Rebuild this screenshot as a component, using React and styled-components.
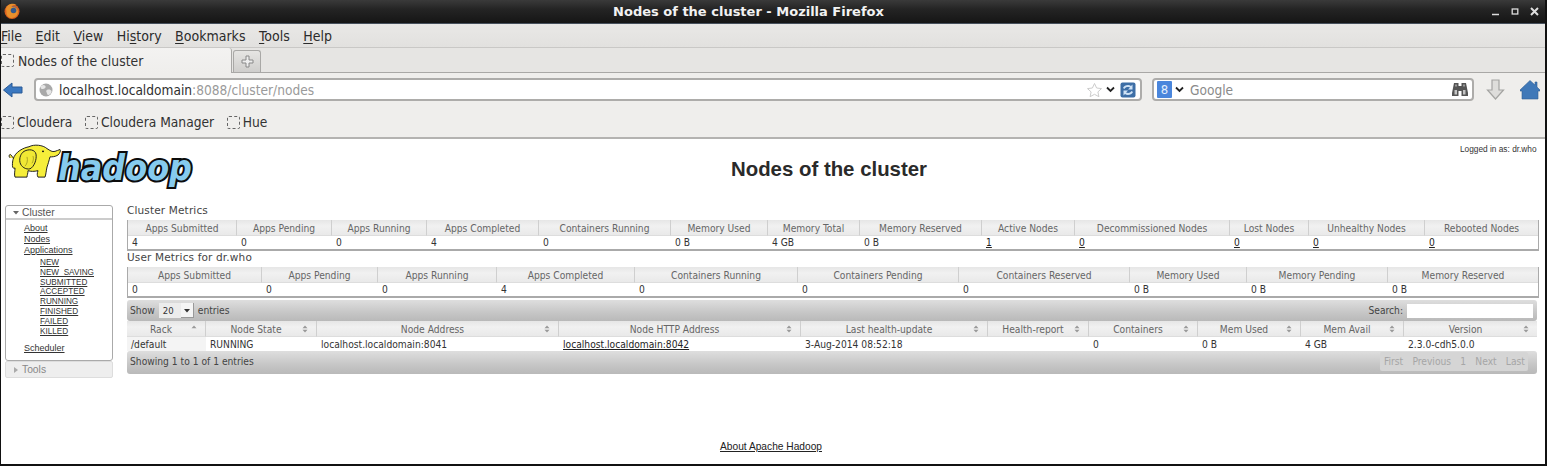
import React from "react";
import styled, { createGlobalStyle } from "styled-components";

const Global = createGlobalStyle`
  html, body { margin: 0; padding: 0; background: #000; }
  * { box-sizing: border-box; }
`;

const UI = `"DejaVu Sans", "Liberation Sans", sans-serif`;
const COND = `"DejaVu Sans Condensed", "DejaVu Sans", "Liberation Sans", sans-serif`;
const ARIAL = `"Liberation Sans", Arial, sans-serif`;

const Win = styled.div`
  width: 1547px; height: 466px; display: flex; flex-direction: column;
  border-left: 1px solid #111; border-right: 2px solid #111; border-bottom: 2px solid #111;
  font-family: ${COND}; font-stretch: condensed; overflow: hidden; background: #fff;
`;
const TitleBar = styled.div`
  height: 24px; flex: none; display: flex; align-items: center; padding: 0 4px 0 3px;
  background: linear-gradient(#3a3a3a 0, #242424 40%, #151515 100%);
  border-bottom: 1px solid #46505c; color: #f2f2f2;
`;
const TitleText = styled.div`
  flex: 1; text-align: center; font: 700 13px ${UI}; font-stretch: normal; padding-right: 14px;
`;
const WinBtns = styled.div`display: flex; align-items: center; gap: 11px; padding-right: 2px;`;
const MenuBar = styled.div`
  height: 24px; flex: none; display: flex; align-items: center; gap: 13.5px;
  background: linear-gradient(#e9e8e6, #e2e1df); border-bottom: 1px solid #c9c8c6;
  font-size: 14px; color: #2b2b2b;
`;
const U = styled.span`text-decoration: underline; text-underline-offset: 2px;`;
const TabBar = styled.div`
  height: 25px; flex: none; display: flex; align-items: flex-end;
  background: #e6e5e3; border-bottom: 1px solid #a9a8a6;
`;
const Tab = styled.div`
  width: 231px; height: 25px; display: flex; align-items: center; gap: 4px;
  background: linear-gradient(#f3f2f1, #efeeec); border-right: 1px solid #a9a8a6; border-radius: 0 3px 0 0;
  font-size: 13.8px; color: #333; margin-bottom: -1px;
`;
const Favicon = styled.span`
  display: inline-block; width: 13px; height: 13px; flex: none;
  border: 1px dashed #666; border-radius: 2px;
`;
const NewTab = styled.div`
  width: 28px; height: 22px; margin-left: 1px; display: flex; align-items: center; justify-content: center;
  background: linear-gradient(#e6e5e3, #cfcecc); border: 1px solid #a9a8a6; border-bottom: 0; border-radius: 3px 3px 0 0;
`;
const NavBar = styled.div`
  height: 33px; flex: none; display: flex; align-items: center; background: #efeeec; padding: 0 3px 0 2px;
`;
const Field = styled.div`
  height: 23px; display: flex; align-items: center; background: #fff;
  border: 2px solid #adacaa; border-radius: 4px; width: ${p => p.$w}px; margin-left: ${p => p.$ml}px;
  font-size: 13.6px; padding: 0 4px 0 3px; gap: 3px;
`;
const Url = styled.div`flex: 1; color: #2f2f2f; padding-left: 3px; white-space: nowrap;`;
const Dim = styled.span`color: #9a9a9a;`;
const Hint = styled.div`flex: 1; color: #8a8a8a; padding-left: 3px;`;
const ToolIcon = styled.svg`flex: none; margin-left: ${p => p.$ml || 0}px; display: block;`;
const Bookmarks = styled.div`
  height: 33px; flex: none; display: flex; align-items: center; background: #efeeec;
  border-bottom: 2px solid #b4b3b1; font-size: 13.7px; color: #333; padding-top: 1px;
`;
const Bm = styled.div`display: flex; align-items: center; gap: 3px; margin-right: 12.5px;`;

const Page = styled.div`
  flex: 1; min-height: 0; display: flex; flex-direction: column; background: #fff; padding-right: 8px;
  color: #333;
`;
const Header = styled.div`height: 66px; flex: none; display: flex; align-items: flex-start;`;
const Logo = styled.svg`flex: none; margin: 3px 0 0 5px; display: block;`;
const H1 = styled.h1`
  flex: 1; margin: 19px 0 0; text-align: center; font: 700 20.4px ${ARIAL}; color: #2a2a2a;
`;
const Logged = styled.div`
  flex: none; width: 76px; margin: 5px 1px 0 0; text-align: right; font: 8.3px ${ARIAL}; color: #333; white-space: nowrap;
`;
const Columns = styled.div`display: flex; align-items: flex-start;`;
const Side = styled.div`width: 108px; margin-left: 4px; flex: none; font-family: ${ARIAL}; font-stretch: normal;`;
const Panel = styled.div`border: 1px solid #aaa; border-radius: 3px; height: 156px;`;
const PanelHead = styled.div`
  height: 14px; border-bottom: 2px solid #ccc; display: flex; align-items: center; gap: 3px; padding-left: 7px;
  font-size: 10.3px; color: #555;
`;
const Tools = styled.div`
  height: 17px; background: #eee; border: 1px solid #ddd; border-radius: 2px;
  display: flex; align-items: center; gap: 4px; padding-left: 8px; font-size: 10.3px; color: #888;
`;
const L1 = styled.a`
  display: block; margin-left: 18px; font-size: 9px; line-height: 11px; color: #333; text-decoration: underline;
`;
const L1Wrap = styled.div`padding-top: 3px;`;
const L2Wrap = styled.div`padding: 2px 0 7px 16px;`;
const L2 = styled(L1)`font-size: 8.2px; line-height: 9.8px; margin-left: 18px;`;

const Main = styled.div`flex: 1; margin-left: 14px; min-width: 0;`;
const Label = styled.div`
  font: 10.5px/11px ${UI}; font-stretch: normal; letter-spacing: .15px; color: #444; height: 15px; margin-top: ${p => p.$mt || 0}px;
`;
const Table = styled.table`
  border-collapse: separate; border-spacing: 0; table-layout: fixed; width: 1410px; font-size: 10.2px;
  border-left: ${p => (p.$plain ? 0 : "1px solid #aaa")}; border-right: ${p => (p.$plain ? 0 : "1px solid #aaa")};
  border-bottom: ${p => (p.$plain ? 0 : "2px solid #aaa")};
`;
const Th = styled.th`
  height: 16px; padding: 1px 4px 0; font-weight: 400; color: #666; text-align: center; white-space: nowrap;
  background: linear-gradient(#e6e6e6, #f1f1f1 40%, #e9e9e9); border-right: 1px solid #cfcfcf;
  border-bottom: 1px solid #ddd; position: relative; overflow: hidden;
  &:last-child { border-right: 0; }
`;
const ThIn = styled.span`display: flex; align-items: center; justify-content: center; padding-right: ${p => p.$pr || 0}px;`;
const SortIcon = styled.svg`position: absolute; right: ${p => p.$r || 8}px; top: 4px;`;
const Td = styled.td`
  height: ${p => 13 + (p.$pt || 0)}px; padding: ${p => p.$pt || 0}px 4px 0; line-height: 12px; color: #333; white-space: nowrap; overflow: hidden; background: ${p => p.$bg || "#fff"};
`;
const CellLink = styled.a`color: #222; text-decoration: underline;`;
const Bar = styled.div`
  height: ${p => p.$h}px; margin-top: ${p => p.$mt || 0}px; display: flex; align-items: center;
  justify-content: space-between; width: 1410px; padding: ${p => p.$pad || "0 3px"}; font-size: 10.2px; color: #444;
  background: linear-gradient(#dedede, #c6c6c6 60%, #b9b9b9); border-radius: 3px;
`;
const Group = styled.div`display: flex; align-items: center; gap: 4px;`;
const Select = styled.div`
  width: 35px; height: 15px; background: #ececec; display: flex; align-items: center; justify-content: space-between;
  padding-left: 4px; font-size: 9.5px; color: #333;
`;
const SelBtn = styled.span`
  width: 13px; height: 15px; background: #f5f5f5; border-right: 1px solid #999; border-bottom: 1px solid #999;
  display: flex; align-items: center; justify-content: center;
`;
const SearchBox = styled.div`width: 126px; height: 14px; background: #fff; margin-right: 1px;`;
const Pager = styled.div`
  display: flex; height: 19px; align-items: center; padding: 0 3px 0 4px; background: #d5d5d5; border-radius: 2px;
  color: #a6a6a6; margin-right: 6px; width: 148px; justify-content: space-between;
`;
const Footer = styled.div`
  margin-top: auto; height: 23px; padding-left: 4px; text-align: center; font: 10.2px ${ARIAL}; font-stretch: normal; color: #222; text-decoration: underline;
`;

const diffs = a => a.slice(1).map((v, i) => v - a[i]);

function Cols({ edges }) {
  return <colgroup>{diffs(edges).map((w, i) => <col key={i} width={w} />)}</colgroup>;
}

const Sort = ({ only }) => (
  <SortIcon width="6" height="8" viewBox="0 0 6 8" fill="#999">
    <path d="M3 0.5 5.5 3.2H.5z" />
    {!only && <path d="M3 7.5 .5 4.8H5.5z" />}
  </SortIcon>
);

const Caret = ({ c = "#333" }) => (
  <svg width="6" height="5" viewBox="0 0 6 5"><path d="M0 1h6L3 4.5z" fill={c} /></svg>
);
const Chev = () => (
  <ToolIcon width="9" height="7" viewBox="0 0 9 7"><path d="M1 1.5 4.500 5 8 1.500" fill="none" stroke="#222" strokeWidth="1.800" /></ToolIcon>
);

const Firefox = () => (
  <svg width="16" height="17" viewBox="0 0 16 17">
    <circle cx="8" cy="8.500" r="7.500" fill="#d9601f" />
    <circle cx="9" cy="8" r="4.600" fill="#3c6fa8" />
    <path d="M2 6C3 1 9-.5 13 2c-3-.6-5 .5-5.500 2 3-.5 6 1 6.500 4 .3 4-3 7-6.500 7C5 15 2 12 2.500 9z" fill="#e8902c" />
    <circle cx="9.500" cy="7.500" r="2.800" fill="#33588c" />
  </svg>
);

const Elephant = () => (
  <g stroke="#1a1a1a" strokeWidth="1" strokeLinejoin="round" transform="translate(1 2) scale(1 .92)">
    <path d="M3 15c-2-2 0-5 1-3 1 1 2 3 3 4" fill="#eee24a" />
    <path d="M6 17C8 8 17 4 22 3 27 0 36 1 40 5c3 2 5 4 8 3 2-1 3-1 5-2 1 1 0 4-2 6-3 2-6 2-8 2-1 4-2 8-3 11-1 5-1 8-2 11h-7c-1-2-1-4 0-7-4 1-7 1-10 0 0 3-1 5-1 7H8c-1-3 0-6 0-10C5 28 5 22 6 17z" fill="#f6ee3a" />
    <path d="M17 8c5-3 11-2 12 3 1 6-2 14-6 16-4 1-9-2-10-7-1-5 1-10 4-12z" fill="#f0e834" />
    <path d="M20 14c1 4 0 8-2 10M26 13c1 3 0 6-1 8" fill="none" stroke="#8d8620" strokeWidth=".7" />
    <circle cx="36" cy="8" r="1" fill="#111" stroke="none" />
  </g>
);

const edgesA = [127, 236, 331, 426, 538, 670, 767, 859, 981, 1074, 1229, 1308, 1424, 1537];
const headA = ["Apps Submitted", "Apps Pending", "Apps Running", "Apps Completed", "Containers Running", "Memory Used", "Memory Total", "Memory Reserved", "Active Nodes", "Decommissioned Nodes", "Lost Nodes", "Unhealthy Nodes", "Rebooted Nodes"];
const rowA = ["4", "0", "0", "4", "0", "0 B", "4 GB", "0 B", "@1", "@0", "@0", "@0", "@0"];
const edgesB = [127, 261, 377, 496, 634, 797, 958, 1129, 1246, 1387, 1537];
const headB = ["Apps Submitted", "Apps Pending", "Apps Running", "Apps Completed", "Containers Running", "Containers Pending", "Containers Reserved", "Memory Used", "Memory Pending", "Memory Reserved"];
const rowB = ["0", "0", "0", "4", "0", "0", "0", "0 B", "0 B", "0 B"];
const edgesC = [127, 206, 317, 559, 801, 988, 1089, 1198, 1301, 1404, 1537];
const headC = ["Rack", "Node State", "Node Address", "Node HTTP Address", "Last health-update", "Health-report", "Containers", "Mem Used", "Mem Avail", "Version"];
const rowC = ["/default", "RUNNING", "localhost.localdomain:8041", "@localhost.localdomain:8042", "3-Aug-2014 08:52:18", "", "0", "0 B", "4 GB", "2.3.0-cdh5.0.0"];

const cell = v => (v.startsWith("@") ? <CellLink>{v.slice(1)}</CellLink> : v);

function Metric({ edges, head, row }) {
  return (
    <Table>
      <Cols edges={edges} />
      <thead><tr>{head.map(h => <Th key={h}>{h}</Th>)}</tr></thead>
      <tbody><tr>{row.map((v, i) => <Td key={i}>{cell(v)}</Td>)}</tr></tbody>
    </Table>
  );
}

export default function App() {
  return (
    <>
      <Global />
      <Win>
        <TitleBar>
          <Firefox />
          <TitleText>Nodes of the cluster - Mozilla Firefox</TitleText>
          <WinBtns>
            <svg width="9" height="9" viewBox="0 0 9 9"><path d="M1 7.500h7" stroke="#ddd" strokeWidth="1.500" /></svg>
            <svg width="8" height="9" viewBox="0 0 8 9"><rect x="1.200" y="2" width="5.600" height="5" fill="none" stroke="#ddd" strokeWidth="1.300" /></svg>
            <svg width="9" height="9" viewBox="0 0 9 9"><path d="M1 1l7 7M8 1 1 8" stroke="#ddd" strokeWidth="2" /></svg>
          </WinBtns>
        </TitleBar>
        <MenuBar>
          <span><U>F</U>ile</span>
          <span><U>E</U>dit</span>
          <span><U>V</U>iew</span>
          <span>Hi<U>s</U>tory</span>
          <span><U>B</U>ookmarks</span>
          <span><U>T</U>ools</span>
          <span><U>H</U>elp</span>
        </MenuBar>
        <TabBar>
          <Tab><Favicon />Nodes of the cluster</Tab>
          <NewTab>
            <svg width="13" height="13" viewBox="0 0 13 13"><path d="M5 1h3v4h4v3H8v4H5V8H1V5h4z" fill="#eee" stroke="#888" /></svg>
          </NewTab>
        </TabBar>
        <NavBar>
          <ToolIcon width="20" height="20" viewBox="0 0 20 20">
            <path d="M0.500 10 9 3v4h10v6H9v4z" fill="#3b78c0" stroke="#2a5a96" />
          </ToolIcon>
          <Field $w={1108} $ml={11}>
            <ToolIcon width="14" height="14" viewBox="0 0 14 14">
              <circle cx="7" cy="7" r="6.500" fill="#a9a9a9" />
              <path d="M4 2c2 0 3 1 2.500 2.500S4 6 3 6 1 5 2 3zM8 7c2-1 4 0 4.500 1S11 12 9.500 12 8 10 7.500 9 7 8 8 7z" fill="#e6e6e6" />
            </ToolIcon>
            <Url>localhost.localdomain<Dim>:8088/cluster/nodes</Dim></Url>
            <ToolIcon width="17" height="16" viewBox="0 0 17 16">
              <path d="M8.500 1.500 10.600 6l4.900.6-3.600 3.300 1 4.800-4.400-2.400-4.400 2.400 1-4.800L1.500 6.600 6.400 6z" fill="#fff" stroke="#ccc" />
            </ToolIcon>
            <Chev />
            <ToolIcon $ml={2} width="16" height="16" viewBox="0 0 16 16">
              <rect x=".5" y=".5" width="15" height="15" rx="2" fill="#3d6ea6" />
              <path d="M3 6c1-3 6-4 8-2l1.500-1.500V7.500H8L10 5.500C8 4.500 5.500 5 4.500 7z" fill="#cfe2f5" />
              <path d="M13 10c-1 3-6 4-8 2l-1.500 1.500V8.500H8L6 10.500c2 1 4.500.5 5.500-1.500z" fill="#cfe2f5" />
            </ToolIcon>
          </Field>
          <Field $w={322} $ml={10}>
            <ToolIcon width="15" height="17" viewBox="0 0 15 17">
              <rect width="15" height="17" rx="1" fill="#4a86dc" />
              <text x="7.500" y="13" textAnchor="middle" fontSize="13" fontFamily={UI} fill="#e4eefc">8</text>
            </ToolIcon>
            <Chev />
            <Hint>Google</Hint>
            <ToolIcon width="16" height="15" viewBox="0 0 16 15">
              <path d="M2 1h4.500v3h3V1H14l2 10v3H9.500V9h-3v5H0v-3z" fill="#555" />
              <path d="M2.500 8h2.500v4.500H2.500zM11 8h2.500v4.500H11z" fill="#c4c4c4" />
              <path d="M3 2.500h2v2H3zM11 2.500h2v2h-2z" fill="#999" />
            </ToolIcon>
          </Field>
          <ToolIcon $ml={12} width="19" height="21" viewBox="0 0 19 21">
            <path d="M6 1h7v10h4.500L9.500 20 1.500 11H6z" fill="#dedddb" stroke="#a4a4a2" strokeWidth="1.200" />
          </ToolIcon>
          <ToolIcon $ml={15} width="20" height="20" viewBox="0 0 20 20">
            <path d="M10 .5 15 5V2h2v5l3 3v1h-2v8H2v-8H0v-1z" fill="#3f78b8" stroke="#2f5f96" strokeWidth=".6" />
          </ToolIcon>
        </NavBar>
        <Bookmarks>
          <Bm><Favicon />Cloudera</Bm>
          <Bm><Favicon />Cloudera Manager</Bm>
          <Bm><Favicon />Hue</Bm>
        </Bookmarks>
        <Page>
          <Header>
            <Logo width="192" height="50" viewBox="0 0 192 50">
              <Elephant />
              <text
                x="52" y="38" fontFamily={UI} fontWeight="700" fontStyle="italic" fontSize="36"
                textLength="134" lengthAdjust="spacingAndGlyphs"
                fill="#86cbee" stroke="#0c0c0c" strokeWidth="4.200" paintOrder="stroke"
              >hadoop</text>
            </Logo>
            <H1>Nodes of the cluster</H1>
            <Logged>Logged in as: dr.who</Logged>
          </Header>
          <Columns>
            <Side>
              <Panel>
                <PanelHead><Caret c="#666" />Cluster</PanelHead>
                <L1Wrap>
                  <L1>About</L1>
                  <L1>Nodes</L1>
                  <L1>Applications</L1>
                </L1Wrap>
                <L2Wrap>
                  {["NEW", "NEW_SAVING", "SUBMITTED", "ACCEPTED", "RUNNING", "FINISHED", "FAILED", "KILLED"].map(s => <L2 key={s}>{s}</L2>)}
                </L2Wrap>
                <L1>Scheduler</L1>
              </Panel>
              <Tools>
                <svg width="4" height="6" viewBox="0 0 4 6"><path d="M0 0l4 3-4 3z" fill="#aaa" /></svg>
                Tools
              </Tools>
            </Side>
            <Main>
              <Label>Cluster Metrics</Label>
              <Metric edges={edgesA} head={headA} row={rowA} />
              <Label $mt={1}>User Metrics for dr.who</Label>
              <Metric edges={edgesB} head={headB} row={rowB} />
              <Bar $h={21} $mt={2}>
                <Group>
                  Show
                  <Select>20<SelBtn><Caret /></SelBtn></Select>
                  entries
                </Group>
                <Group>Search:<SearchBox /></Group>
              </Bar>
              <Table $plain>
                <Cols edges={edgesC} />
                <thead>
                  <tr>
                    {headC.map((h, i) => (
                      <Th key={h}>
                        <ThIn $pr={10}>{h}</ThIn>
                        <Sort only={i === 0} />
                      </Th>
                    ))}
                  </tr>
                </thead>
                <tbody>
                  <tr>{rowC.map((v, i) => <Td key={i} $pt={1} $bg={i === 0 ? "#f4f4f4" : "#fff"}>{cell(v)}</Td>)}</tr>
                </tbody>
              </Table>
              <Bar $h={23} $pad="0 3px 2px">
                <span>Showing 1 to 1 of 1 entries</span>
                <Pager>
                  <span>First</span><span>Previous</span><span>1</span><span>Next</span><span>Last</span>
                </Pager>
              </Bar>
            </Main>
          </Columns>
          <Footer>About Apache Hadoop</Footer>
        </Page>
      </Win>
    </>
  );
}
